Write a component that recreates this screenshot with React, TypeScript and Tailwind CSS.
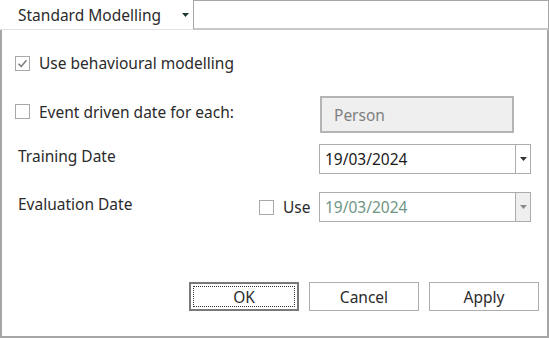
import React from "react";

function Check({ checked }: { checked?: boolean }) {
    return (
        <span className="flex h-[15px] w-[15px] shrink-0 items-center justify-center border border-[#a8a8a8] bg-white">
            {checked && (
                <svg width="11" height="11" viewBox="0 0 11 11">
                    <path d="M1.5 5.8 L4.2 8.4 L9.5 2.2" fill="none" stroke="#7a7a7a" strokeWidth="1.5" />
                </svg>
            )}
        </span>
    );
}

function Caret({ color = "#333" }: { color?: string }) {
    return (
        <svg width="7" height="4" viewBox="0 0 7 4">
            <path d="M0 0 L7 0 L3.5 4 Z" fill={color} />
        </svg>
    );
}

function DateBox({ value, disabled }: { value: string; disabled?: boolean }) {
    return (
        <div className="flex h-[30px] w-[212px] border border-[#acacac] bg-white">
            <div className={`flex flex-1 items-center pl-[5px] ${disabled ? "text-[#6f9585]" : "text-[#1a1a1a]"}`}>{value}</div>
            <div className={`flex w-[15px] items-center justify-center border-l border-[#acacac] ${disabled ? "bg-[#efefef]" : "bg-white"}`}>
                <Caret color={disabled ? "#8a8a8a" : "#333"} />
            </div>
        </div>
    );
}

export default function App() {
    return (
        <div
            className="flex h-[338px] w-[549px] flex-col bg-white text-[15.5px] leading-[20px] text-[#2b2b2b]"
            style={{ fontFamily: '"Segoe UI", "Noto Sans", sans-serif' }}
        >
            {/* tab strip */}
            <div className="flex h-[30px] shrink-0">
                <div className="flex w-[193px] items-center border-b border-[#e2e2e2] pl-[18px] pr-[4px]">
                    <span className="flex-1">Standard Modelling</span>
                    <Caret color="#1f3b30" />
                </div>
                <div className="flex-1 border border-b-2 border-[#a6a6a6] border-b-[#c8c8c8]" />
            </div>

            {/* body */}
            <div className="flex flex-1 flex-col border-x-2 border-b-2 border-[#a6a6a6] pl-[13px] pr-[16px]">
                <div className="mt-[23px] flex h-[20px] items-center gap-[9px]">
                    <Check checked />
                    <span>Use behavioural modelling</span>
                </div>

                <div className="mt-[23px] flex h-[37px] items-center">
                    <div className="mb-[6px] flex flex-1 items-center gap-[9px]">
                        <Check />
                        <span>Event driven date for each:</span>
                    </div>
                    <div className="mr-[17px] flex h-[37px] w-[194px] items-center border-2 border-[#b4b4b4] bg-[#efefef] pl-[12px] text-[#808080]">
                        Person
                    </div>
                </div>

                <div className="mt-[11px] flex h-[30px] items-center">
                    <span className="mb-[6px] ml-[3px] flex-1">Training Date</span>
                    <DateBox value="19/03/2024" />
                </div>

                <div className="mt-[18px] flex h-[30px] items-center">
                    <span className="mb-[6px] ml-[3px] flex-1">Evaluation Date</span>
                    <Check />
                    <span className="ml-[9px] w-[36px]">Use</span>
                    <DateBox value="19/03/2024" disabled />
                </div>

                <div className="mt-auto mb-[25px] -mr-[8px] flex justify-end gap-[10px]">
                    <button className="h-[29px] w-[110px] border-2 border-[#7a7a7a] p-[2px]">
                        <span className="flex h-full w-full items-center justify-center border border-dotted border-[#333]">OK</span>
                    </button>
                    <button className="h-[29px] w-[110px] border border-[#adadad]">Cancel</button>
                    <button className="h-[29px] w-[110px] border border-[#adadad]">Apply</button>
                </div>
            </div>
        </div>
    );
}
